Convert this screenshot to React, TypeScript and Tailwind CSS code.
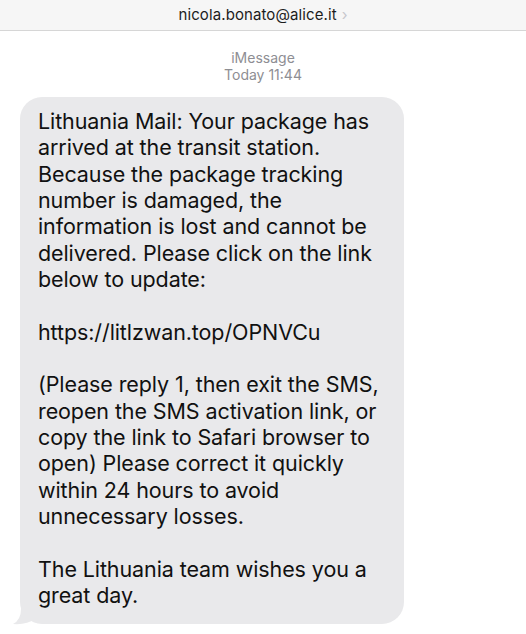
import React from "react";

const lines: string[] = [
  "Lithuania Mail: Your package has",
  "arrived at the transit station.",
  "Because the package tracking",
  "number is damaged, the",
  "information is lost and cannot be",
  "delivered. Please click on the link",
  "below to update:",
  "",
  "https://litlzwan.top/OPNVCu",
  "",
  "(Please reply 1, then exit the SMS,",
  "reopen the SMS activation link, or",
  "copy the link to Safari browser to",
  "open) Please correct it quickly",
  "within 24 hours to avoid",
  "unnecessary losses.",
  "",
  "The Lithuania team wishes you a",
  "great day.",
];

export default function App() {
  return (
    <div
      className="w-[526px] h-[634px] bg-white overflow-hidden"
      style={{ fontFamily: "Inter, 'Liberation Sans', sans-serif" }}
    >
      <div className="h-[31px] bg-[#f6f6f6] border-b border-[#d6d6d6] flex items-center justify-center">
        <span className="text-[15px] text-[#1c1c1c] tracking-[0.1px]">nicola.bonato@alice.it</span>
        <span className="ml-[5px] text-[#c7c7cc] text-[15px]">›</span>
      </div>
      <div className="flex flex-col items-center mt-[18px] text-[14px] leading-[17px] text-[#8e8e93]">
        <span>iMessage</span>
        <span>Today 11:44</span>
      </div>
      <div className="relative ml-[20px] mt-[14px] w-[384px] bg-[#e9e9eb] rounded-[22px] pl-[18px] pr-[10px] pt-[11px] pb-[16px]">
        <div className="text-[21.5px] leading-[26.33px] text-[#111] tracking-[-0.1px]">
          {lines.map((l, i) => (
            <div key={i} className="whitespace-nowrap h-[26.33px]">
              {l}
            </div>
          ))}
        </div>
        <svg
          className="absolute left-[-7px] bottom-[-1px]"
          width="22"
          height="22"
          viewBox="0 0 22 22"
        >
          <path d="M22 0 L22 16 Q14 22 0 21 Q8 17 8 6 L8 0 Z" fill="#e9e9eb" />
        </svg>
      </div>
    </div>
  );
}
